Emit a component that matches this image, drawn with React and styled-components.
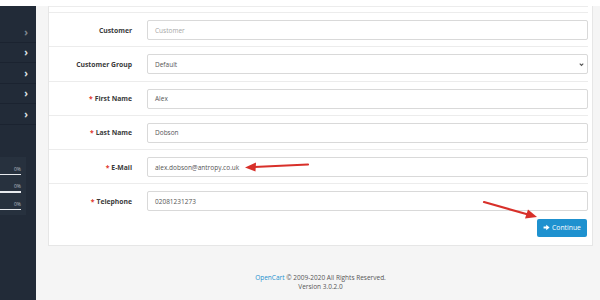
import React from "react";
import styled, { createGlobalStyle } from "styled-components";

const GlobalStyle = createGlobalStyle`
  html, body {
    margin: 0;
    padding: 0;
    background: #f5f5f5;
    font-family: "Open Sans", "Liberation Sans", sans-serif;
  }
`;

const fields = [
  { label: "Customer", placeholder: "Customer" },
  { label: "Customer Group", value: "Default", select: true },
  { label: "First Name", value: "Alex", required: true },
  { label: "Last Name", value: "Dobson", required: true },
  { label: "E-Mail", value: "alex.dobson@antropy.co.uk", required: true },
  { label: "Telephone", value: "02081231273", required: true },
];

const menuItems = [0.5, 1, 1, 1, 1];

const App = () => {
  return (
    <>
      <GlobalStyle />
      <Page>
        <Header />
        <Body>
          <Sidebar>
            <Menu>
              {menuItems.map((o, i) => (
                <MenuItem key={i}>
                  <Chevron $opacity={o}>›</Chevron>
                </MenuItem>
              ))}
            </Menu>
            <Stats>
              {[0, 1, 2].map((i) => (
                <Stat key={i}>
                  <StatText>0%</StatText>
                  <StatBar />
                </Stat>
              ))}
            </Stats>
          </Sidebar>
          <Content>
            <Card>
              <CardTop />
              {fields.map((f) => (
                <Row key={f.label}>
                  <Label>
                    {f.required && <Star>*</Star>}
                    {f.label}
                  </Label>
                  <Field $placeholder={!!f.placeholder} $select={!!f.select}>
                    {f.placeholder || f.value}
                    {f.select && (
                      <Caret viewBox="0 0 10 10">
                        <path d="M2.5 3.8 L5 6.3 L7.5 3.8" fill="none" stroke="#555" strokeWidth="1.5" />
                      </Caret>
                    )}
                  </Field>
                </Row>
              ))}
              <Actions>
                <Button>
                  <ButtonIcon viewBox="0 0 10 10">
                    <path d="M0.8 3.6 H4.6 V1 L9.4 5 L4.6 9 V6.4 H0.8 Z" fill="#fff" />
                  </ButtonIcon>
                  Continue
                </Button>
              </Actions>
            </Card>
            <Footer>
              <div>
                <FooterLink>OpenCart</FooterLink> © 2009-2020 All Rights Reserved.
              </div>
              <div>Version 3.0.2.0</div>
            </Footer>
          </Content>
        </Body>
        <Annotations viewBox="0 0 600 300">
          <line x1="308" y1="164.5" x2="254" y2="167" stroke="#d8302a" strokeWidth="2.2" strokeLinecap="round" />
          <polygon points="245,167.5 256,162.5 255.5,171.5" fill="#d8302a" />
          <line x1="484" y1="202" x2="528" y2="214.5" stroke="#d8302a" strokeWidth="2.2" strokeLinecap="round" />
          <polygon points="537,217 525,218.5 528,209.5" fill="#d8302a" />
        </Annotations>
      </Page>
    </>
  );
};

const Page = styled.div`
  position: relative;
  width: 600px;
  height: 300px;
  overflow: hidden;
  display: flex;
  flex-direction: column;
`;

const Header = styled.div`
  height: 6px;
  background: #fff;
  flex-shrink: 0;
`;

const Body = styled.div`
  flex: 1;
  display: flex;
`;

const Sidebar = styled.div`
  width: 36px;
  background: #222b38;
  display: flex;
  flex-direction: column;
`;

const Menu = styled.div`
  padding-top: 16px;
`;

const MenuItem = styled.div`
  height: 20.5px;
  border-bottom: 1px solid #1b2330;
  display: flex;
  align-items: center;
  justify-content: flex-end;
  padding-right: 8px;
  box-sizing: border-box;
`;

const Chevron = styled.span`
  color: #dfe3e8;
  opacity: ${(p) => p.$opacity};
  font-size: 10px;
  font-weight: 700;
  line-height: 1;
`;

const Stats = styled.div`
  margin-top: 32px;
  width: 26px;
  background: #27313e;
  padding: 8px 5px 5px 0;
  box-sizing: border-box;
  display: flex;
  flex-direction: column;
  gap: 7px;
`;

const Stat = styled.div`
  display: flex;
  flex-direction: column;
  align-items: flex-end;
`;

const StatText = styled.div`
  color: #b6bcc6;
  font-size: 5px;
  line-height: 8px;
`;

const StatBar = styled.div`
  width: 21px;
  height: 1.5px;
  background: #e8eaee;
  margin-top: 1px;
`;

const Content = styled.div`
  flex: 1;
  padding: 0 7px 0 12px;
  display: flex;
  flex-direction: column;
`;

const Card = styled.div`
  background: #fff;
  border: 1px solid #e6e6e6;
  border-top: none;
  padding: 0 4px 8px 0;
`;

const CardTop = styled.div`
  height: 5px;
  border-top: 1px solid #ececec;
`;

const Row = styled.div`
  display: grid;
  grid-template-columns: 83px 1fr;
  column-gap: 15px;
  align-items: center;
  border-top: 1px solid #ececec;
  padding: 7px 0 6.3px;
`;

const Label = styled.div`
  text-align: right;
  font-weight: 700;
  font-size: 6.8px;
  color: #3a3a3a;
`;

const Star = styled.span`
  color: #e0332b;
  margin-right: 2px;
`;

const Field = styled.div`
  height: 20px;
  box-sizing: border-box;
  border: 1px solid #d9d9d9;
  border-radius: 2px;
  padding: 0 ${(p) => (p.$select ? "2px" : "7px")} 0 7px;
  display: flex;
  align-items: center;
  justify-content: space-between;
  font-size: 6.5px;
  color: ${(p) => (p.$placeholder ? "#a6a6a6" : "#555")};
`;

const Caret = styled.svg`
  width: 7px;
  height: 7px;
`;

const Actions = styled.div`
  display: flex;
  justify-content: flex-end;
  padding-top: 1px;
  padding-right: 1px;
`;

const Button = styled.div`
  height: 18px;
  width: 50px;
  box-sizing: border-box;
  background: #1e91cf;
  border-radius: 2px;
  color: #fff;
  font-size: 6.8px;
  display: flex;
  align-items: center;
  justify-content: center;
  gap: 2px;
`;

const ButtonIcon = styled.svg`
  width: 7px;
  height: 7px;
`;

const Footer = styled.div`
  margin-top: 27px;
  text-align: center;
  font-size: 6.5px;
  line-height: 9px;
  color: #555;
`;

const FooterLink = styled.span`
  color: #1e91cf;
`;

const Annotations = styled.svg`
  position: absolute;
  left: 0;
  top: 0;
  width: 600px;
  height: 300px;
  pointer-events: none;
`;

export default App;
